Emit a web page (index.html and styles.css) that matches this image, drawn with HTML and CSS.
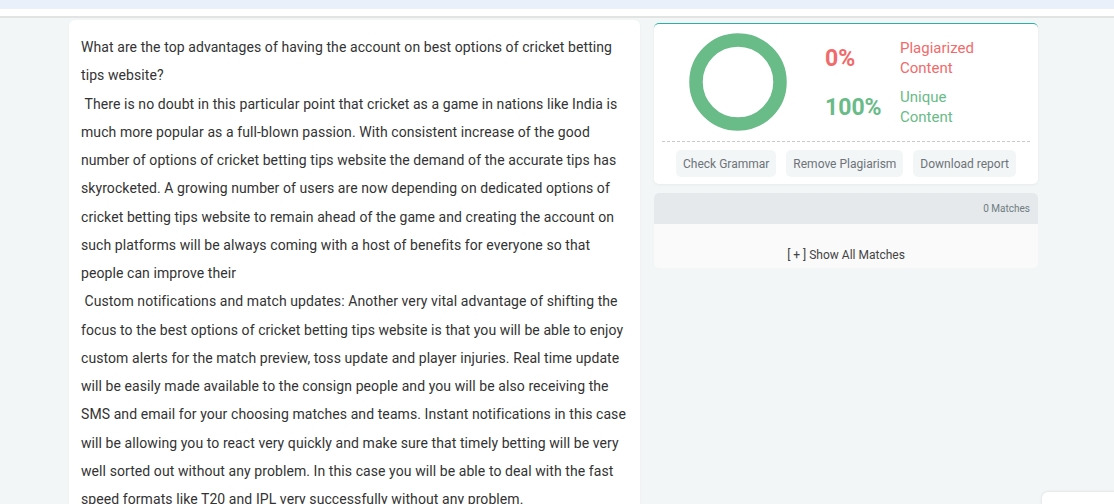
FILE: index.html
```html
<!DOCTYPE html>
<html lang="en">
<head>
    <meta charset="UTF-8">
    <meta name="viewport" content="width=device-width, initial-scale=1.0">
    <title>Plagiarism Report</title>
    <link rel="stylesheet" href="styles.css">
</head>
<body>
    <div class="topband"></div>
    <div class="topbar"></div>

    <div class="container">
        <div class="textcard">
            What are the top advantages of having the account on best options of cricket betting tips website?<br>
            &nbsp;There is no doubt in this particular point that cricket as a game in nations like India is much more popular as a full-blown passion. With consistent increase of the good number of options of cricket betting tips website the demand of the accurate tips has skyrocketed. A growing number of users are now depending on dedicated options of cricket betting tips website to remain ahead of the game and creating the account on such platforms will be always coming with a host of benefits for everyone so that people can improve their<br>
            &nbsp;Custom notifications and match updates: Another very vital advantage of shifting the focus to the best options of cricket betting tips website is that you will be able to enjoy custom alerts for the match preview, toss update and player injuries. Real time update will be easily made available to the consign people and you will be also receiving the SMS and email for your choosing matches and teams. Instant notifications in this case will be allowing you to react very quickly and make sure that timely betting will be very well sorted out without any problem. In this case you will be able to deal with the fast speed formats like T20 and IPL very successfully without any problem.
        </div>

        <div class="side">
            <div class="result">
                <div class="result-top">
                    <svg class="donut" width="98" height="98" viewBox="0 0 98 98">
                        <circle cx="49" cy="49" r="42" fill="none" stroke="#69bb88" stroke-width="13.5"/>
                    </svg>
                    <div class="stats">
                        <div class="stat red">
                            <span class="num">0%</span>
                            <span class="label">Plagiarized<br>Content</span>
                        </div>
                        <div class="stat green">
                            <span class="num">100%</span>
                            <span class="label">Unique<br>Content</span>
                        </div>
                    </div>
                </div>
                <div class="actions">
                    <button class="btn">Check Grammar</button>
                    <button class="btn">Remove Plagiarism</button>
                    <button class="btn">Download report</button>
                </div>
            </div>

            <div class="matches">
                <div class="matches-head">0 Matches</div>
                <div class="matches-body">[ + ] Show All Matches</div>
            </div>
        </div>
    </div>

    <div class="widget"></div>
</body>
</html>
```

FILE: styles.css
```css
body{
    margin: 0;
    background: #f3f6f7;
    font-family: Roboto, "Liberation Sans", sans-serif;
    overflow: hidden;
}
.topband{
    height: 9px;
    background: #eaf0f9;
}
.topbar{
    height: 7px;
    background: #ffffff;
    border-bottom: 2px solid #e2e4e4;
}
.container{
    display: flex;
    align-items: flex-start;
    gap: 14px;
    margin-left: 69px;
    padding-top: 2px;
}
.textcard{
    width: 547px;
    background: #ffffff;
    border-radius: 6px;
    padding: 13px 12px 12px 12px;
    font-size: 14px;
    line-height: 28.25px;
    letter-spacing: 0.08px;
    color: #333333;
    box-shadow: 0 1px 3px rgba(0,0,0,0.04);
}
.side{
    width: 384px;
    padding-top: 3px;
}
.result{
    background: #ffffff;
    border-top: 1px solid #2bb0a6;
    border-radius: 5px;
    padding: 0 8px 7px 8px;
    box-shadow: 0 1px 3px rgba(0,0,0,0.05);
}
.result-top{
    display: flex;
    align-items: flex-start;
    padding: 9px 0 10px 27px;
    border-bottom: 1px dashed #c9c9c9;
}
.donut{
    display: block;
}
.stats{
    margin-left: 38px;
    padding-top: 5px;
}
.stat{
    display: flex;
    align-items: center;
    margin-bottom: 9px;
}
.stat:last-child{
    margin-bottom: 0;
}
.stat .num{
    width: 75px;
    font-size: 23px;
    font-weight: bold;
}
.stat .label{
    font-size: 15px;
    line-height: 20px;
}
.red{
    color: #f06b6b;
}
.green{
    color: #69bb88;
}
.actions{
    display: flex;
    justify-content: center;
    gap: 10px;
    padding-top: 8px;
}
.btn{
    border: none;
    background: #f3f6f7;
    color: #6d7378;
    font-family: Roboto, "Liberation Sans", sans-serif;
    font-size: 12px;
    height: 27px;
    padding: 0 7px;
    border-radius: 5px;
}
.matches{
    margin-top: 9px;
    border-radius: 5px;
    overflow: hidden;
    background: #fafafa;
}
.matches-head{
    height: 31px;
    line-height: 31px;
    background: #e5e9eb;
    text-align: right;
    padding-right: 8px;
    font-size: 10px;
    color: #6f7c82;
}
.matches-body{
    height: 44px;
    text-align: center;
    font-size: 12px;
    line-height: 62px;
    color: #444444;
}
.widget{
    position: fixed;
    left: 1042px;
    top: 492px;
    width: 90px;
    height: 40px;
    background: #ffffff;
    border-radius: 6px 0 0 0;
    box-shadow: 0 0 3px rgba(0,0,0,0.12);
}
```
